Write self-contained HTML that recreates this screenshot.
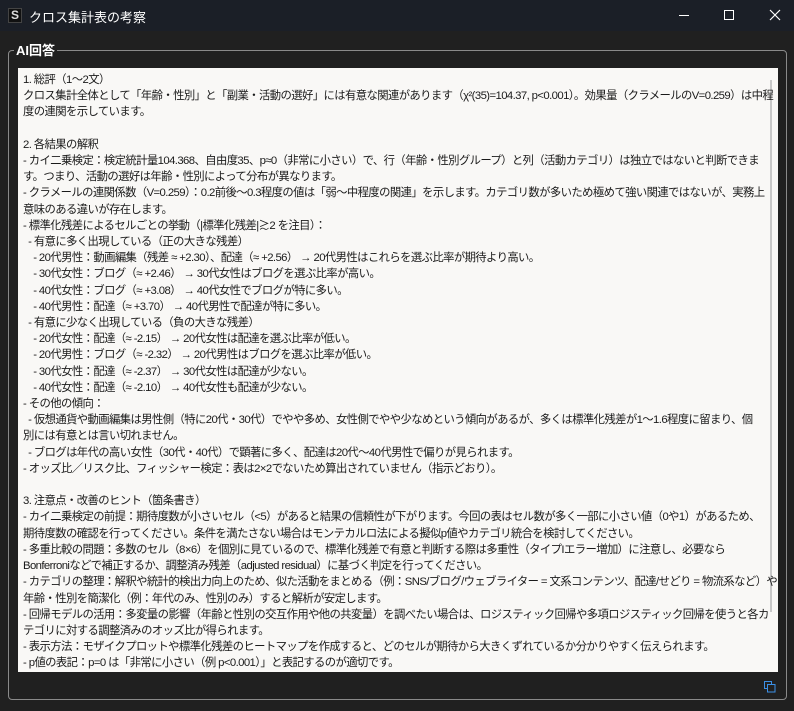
<!DOCTYPE html>
<html><head><meta charset="utf-8"><style>
*{margin:0;padding:0;box-sizing:border-box}
body{width:794px;height:711px;background:#202020;position:relative;overflow:hidden;font-family:"Liberation Sans","Noto Sans CJK JP",sans-serif}
.tb{position:absolute;left:0;top:0;width:794px;height:31px;background:#1b1f27}
.ic{position:absolute;left:8px;top:8px;width:14px;height:15px;background:#111;border:1px solid #444;color:#ddd;font-size:12px;line-height:13px;text-align:center;font-weight:bold}
.tt{position:absolute;left:29px;top:7px;color:#fff;font-size:13px}
.gb{position:absolute;left:8px;top:50px;width:779px;height:650px;border:1px solid #8a8a8a;border-radius:4px}
.gl{position:absolute;left:14px;top:40px;background:#202020;color:#fff;font-size:13px;padding:0 2px;font-weight:bold}
.ta{position:absolute;left:18px;top:68px;width:760px;height:604px;background:#f9f8f6;overflow:hidden}
.tx{position:absolute;left:5px;top:4px;font-size:11.35px;line-height:16.2px;color:#1a1a1a;white-space:pre;letter-spacing:-0.6px}
.sb{position:absolute;right:6px;top:12px;width:2px;height:532px;background:#c8c8c8}
</style></head><body>
<div class="tb"><div class="ic">S</div><div class="tt">クロス集計表の考察</div>
<div style="position:absolute;left:679px;top:15px;width:10px;height:1px;background:#fff"></div>
<div style="position:absolute;left:724px;top:10px;width:10px;height:10px;border:1px solid #fff"></div>
<svg style="position:absolute;left:769px;top:9px" width="12" height="12"><path d="M1 1L11 11M11 1L1 11" stroke="#fff" stroke-width="1.2"/></svg>
</div>
<div class="gb"></div><div class="gl">AI回答</div>
<div class="ta"><div class="sb"></div><div class="tx">1. 総評（1〜2文）
クロス集計全体として「年齢・性別」と「副業・活動の選好」には有意な関連があります（χ²(35)=104.37, p&lt;0.001）。効果量（クラメールのV=0.259）は中程
度の連関を示しています。

2. 各結果の解釈
- カイ二乗検定：検定統計量104.368、自由度35、p≈0（非常に小さい）で、行（年齢・性別グループ）と列（活動カテゴリ）は独立ではないと判断できま
す。つまり、活動の選好は年齢・性別によって分布が異なります。
- クラメールの連関係数（V=0.259）：0.2前後〜0.3程度の値は「弱〜中程度の関連」を示します。カテゴリ数が多いため極めて強い関連ではないが、実務上
意味のある違いが存在します。
- 標準化残差によるセルごとの挙動（|標準化残差|≳2 を注目）：
  - 有意に多く出現している（正の大きな残差）
    - 20代男性：動画編集（残差 ≈ +2.30）、配達（≈ +2.56） → 20代男性はこれらを選ぶ比率が期待より高い。
    - 30代女性：ブログ（≈ +2.46） → 30代女性はブログを選ぶ比率が高い。
    - 40代女性：ブログ（≈ +3.08） → 40代女性でブログが特に多い。
    - 40代男性：配達（≈ +3.70） → 40代男性で配達が特に多い。
  - 有意に少なく出現している（負の大きな残差）
    - 20代女性：配達（≈ -2.15） → 20代女性は配達を選ぶ比率が低い。
    - 20代男性：ブログ（≈ -2.32） → 20代男性はブログを選ぶ比率が低い。
    - 30代女性：配達（≈ -2.37） → 30代女性は配達が少ない。
    - 40代女性：配達（≈ -2.10） → 40代女性も配達が少ない。
- その他の傾向：
  - 仮想通貨や動画編集は男性側（特に20代・30代）でやや多め、女性側でやや少なめという傾向があるが、多くは標準化残差が1〜1.6程度に留まり、個
別には有意とは言い切れません。
  - ブログは年代の高い女性（30代・40代）で顕著に多く、配達は20代〜40代男性で偏りが見られます。
- オッズ比／リスク比、フィッシャー検定：表は2×2でないため算出されていません（指示どおり）。

3. 注意点・改善のヒント（箇条書き）
- カイ二乗検定の前提：期待度数が小さいセル（&lt;5）があると結果の信頼性が下がります。今回の表はセル数が多く一部に小さい値（0や1）があるため、
期待度数の確認を行ってください。条件を満たさない場合はモンテカルロ法による擬似p値やカテゴリ統合を検討してください。
- 多重比較の問題：多数のセル（8×6）を個別に見ているので、標準化残差で有意と判断する際は多重性（タイプIエラー増加）に注意し、必要なら
Bonferroniなどで補正するか、調整済み残差（adjusted residual）に基づく判定を行ってください。
- カテゴリの整理：解釈や統計的検出力向上のため、似た活動をまとめる（例：SNS/ブログ/ウェブライター = 文系コンテンツ、配達/せどり = 物流系など）や
年齢・性別を簡潔化（例：年代のみ、性別のみ）すると解析が安定します。
- 回帰モデルの活用：多変量の影響（年齢と性別の交互作用や他の共変量）を調べたい場合は、ロジスティック回帰や多項ロジスティック回帰を使うと各カ
テゴリに対する調整済みのオッズ比が得られます。
- 表示方法：モザイクプロットや標準化残差のヒートマップを作成すると、どのセルが期待から大きくずれているか分かりやすく伝えられます。
- p値の表記：p=0 は「非常に小さい（例 p&lt;0.001）」と表記するのが適切です。</div></div>
<svg style="position:absolute;left:764px;top:681px" width="12" height="12"><rect x="0.5" y="0.5" width="7" height="7" fill="none" stroke="#3b8fe6"/><rect x="3.5" y="3.5" width="7.5" height="7.5" fill="#202020" stroke="#3b8fe6"/></svg>
</body></html>
